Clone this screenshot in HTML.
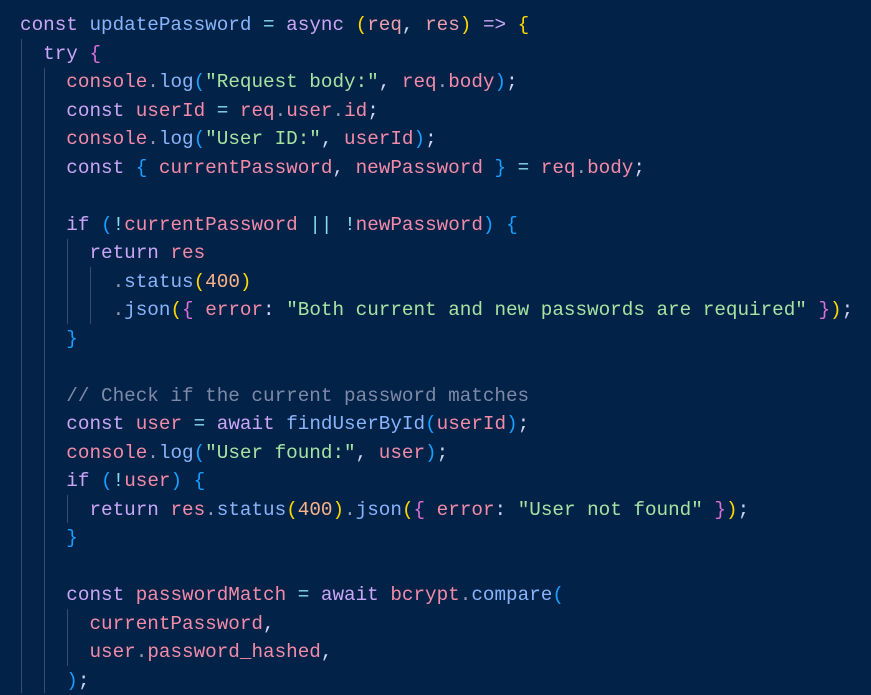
<!DOCTYPE html>
<html><head><meta charset="utf-8"><style>
html,body{margin:0;padding:0;background:#032248;}
body{width:871px;height:693px;overflow:hidden;position:relative;}
pre{margin:0;position:absolute;left:20px;top:11px;font-family:"Liberation Mono","DejaVu Sans Mono",monospace;font-size:19.3px;line-height:28.5px;color:#cdd6f4;white-space:pre;}
.k{color:#cba6f7}.f{color:#89b4fa}.o{color:#89dceb}.v{color:#f38ba8}.p{color:#eba0ac}.s{color:#a6e3a1}.n{color:#fab387}.c{color:#7f89a8}.d{color:#9399b2}
.y{color:#ffd700}.m{color:#da70d6}.b{color:#179fff}
.g{position:absolute;width:1px;background:#3a4c6e;}
</style></head><body>
<div class="g" style="left:21px;top:39px;height:654px"></div>
<div class="g" style="left:44px;top:68px;height:625px"></div>
<div class="g" style="left:67px;top:239px;height:85px"></div>
<div class="g" style="left:90px;top:267px;height:57px"></div>
<div class="g" style="left:67px;top:495px;height:28px"></div>
<div class="g" style="left:67px;top:609px;height:57px"></div>
<pre><span class="k">const</span> <span class="f">updatePassword</span> <span class="o">=</span> <span class="k">async</span> <span class="y">(</span><span class="p">req</span>, <span class="p">res</span><span class="y">)</span> <span class="k">=&gt;</span> <span class="y">{</span>
  <span class="k">try</span> <span class="m">{</span>
    <span class="v">console</span><span class="d">.</span><span class="f">log</span><span class="b">(</span><span class="s">"Request body:"</span>, <span class="v">req</span><span class="d">.</span><span class="v">body</span><span class="b">)</span>;
    <span class="k">const</span> <span class="v">userId</span> <span class="o">=</span> <span class="v">req</span><span class="d">.</span><span class="v">user</span><span class="d">.</span><span class="v">id</span>;
    <span class="v">console</span><span class="d">.</span><span class="f">log</span><span class="b">(</span><span class="s">"User ID:"</span>, <span class="v">userId</span><span class="b">)</span>;
    <span class="k">const</span> <span class="b">{</span> <span class="v">currentPassword</span>, <span class="v">newPassword</span> <span class="b">}</span> <span class="o">=</span> <span class="v">req</span><span class="d">.</span><span class="v">body</span>;

    <span class="k">if</span> <span class="b">(</span><span class="o">!</span><span class="v">currentPassword</span> <span class="o">||</span> <span class="o">!</span><span class="v">newPassword</span><span class="b">)</span> <span class="b">{</span>
      <span class="k">return</span> <span class="v">res</span>
        <span class="d">.</span><span class="f">status</span><span class="y">(</span><span class="n">400</span><span class="y">)</span>
        <span class="d">.</span><span class="f">json</span><span class="y">(</span><span class="m">{</span> <span class="v">error</span>: <span class="s">"Both current and new passwords are required"</span> <span class="m">}</span><span class="y">)</span>;
    <span class="b">}</span>

    <span class="c">// Check if the current password matches</span>
    <span class="k">const</span> <span class="v">user</span> <span class="o">=</span> <span class="k">await</span> <span class="f">findUserById</span><span class="b">(</span><span class="v">userId</span><span class="b">)</span>;
    <span class="v">console</span><span class="d">.</span><span class="f">log</span><span class="b">(</span><span class="s">"User found:"</span>, <span class="v">user</span><span class="b">)</span>;
    <span class="k">if</span> <span class="b">(</span><span class="o">!</span><span class="v">user</span><span class="b">)</span> <span class="b">{</span>
      <span class="k">return</span> <span class="v">res</span><span class="d">.</span><span class="f">status</span><span class="y">(</span><span class="n">400</span><span class="y">)</span><span class="d">.</span><span class="f">json</span><span class="y">(</span><span class="m">{</span> <span class="v">error</span>: <span class="s">"User not found"</span> <span class="m">}</span><span class="y">)</span>;
    <span class="b">}</span>

    <span class="k">const</span> <span class="v">passwordMatch</span> <span class="o">=</span> <span class="k">await</span> <span class="v">bcrypt</span><span class="d">.</span><span class="f">compare</span><span class="b">(</span>
      <span class="v">currentPassword</span>,
      <span class="v">user</span><span class="d">.</span><span class="v">password_hashed</span>,
    <span class="b">)</span>;
</pre>
</body></html>
